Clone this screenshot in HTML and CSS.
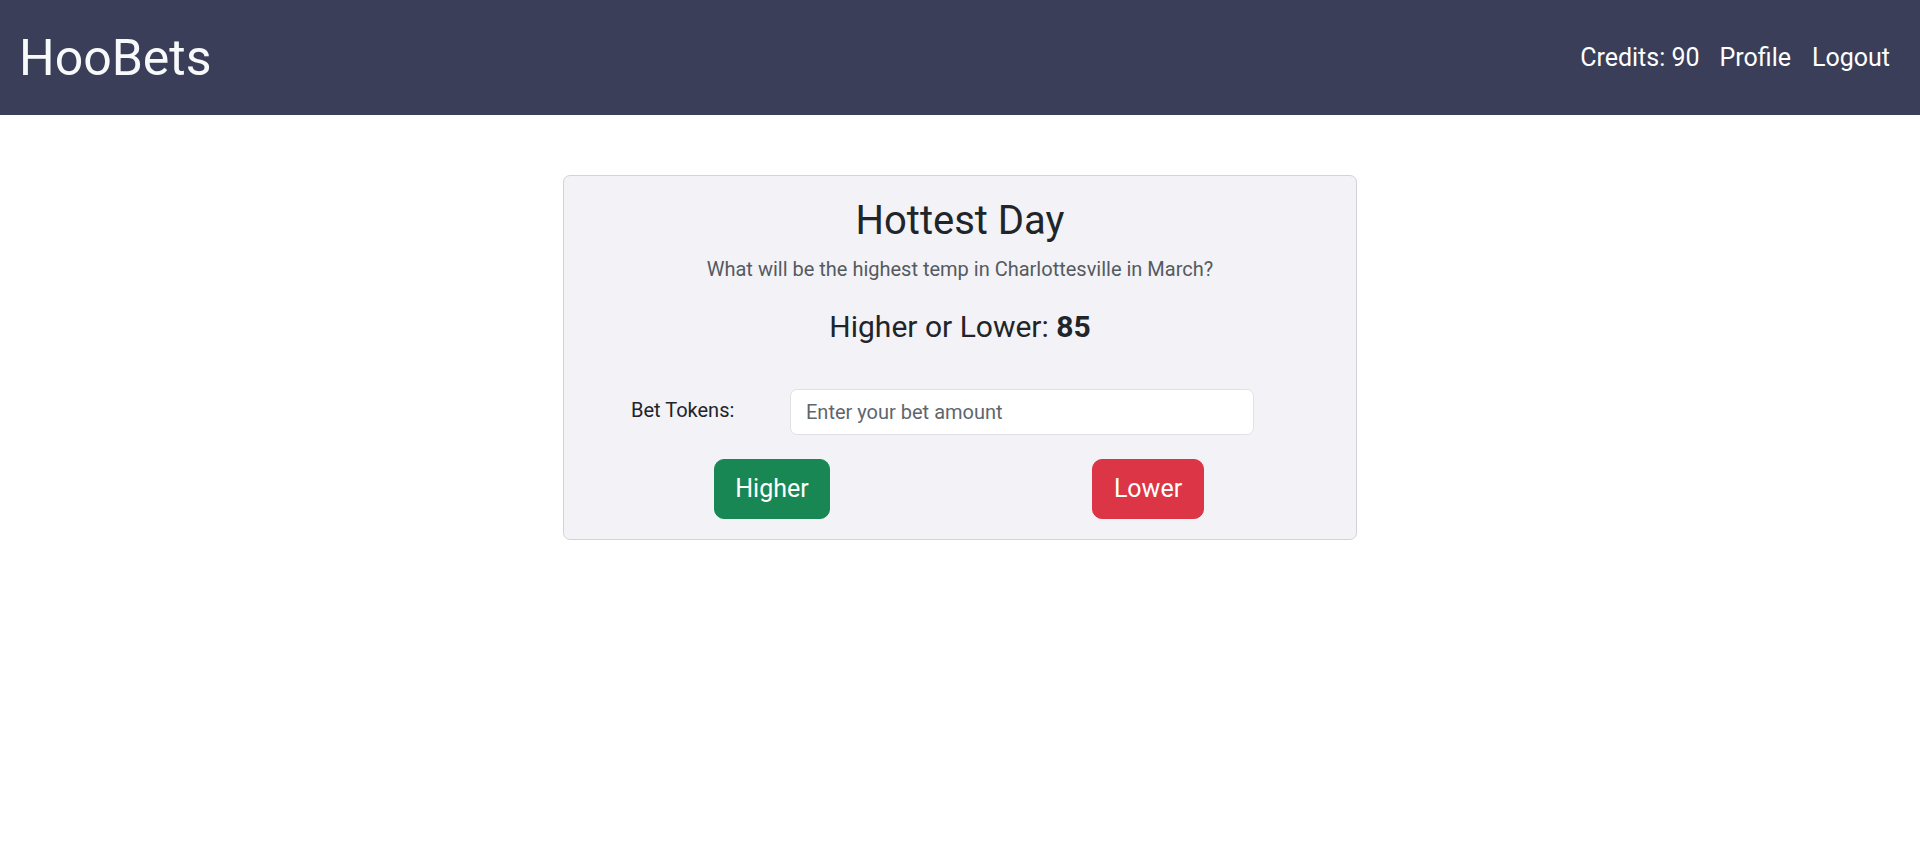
FILE: index.html
```html
<!DOCTYPE html>
<html lang="en">
<head>
<meta charset="utf-8">
<title>HooBets</title>
<link rel="stylesheet" href="styles.css">
</head>
<body>
<header class="topbar">
  <a class="brand" href="#">HooBets</a>
  <nav class="nav">
    <span class="nav-item">Credits: 90</span>
    <a class="nav-item" href="#">Profile</a>
    <a class="nav-item" href="#">Logout</a>
  </nav>
</header>
<main class="main">
  <section class="card">
    <h2 class="card-title">Hottest Day</h2>
    <p class="card-subtitle">What will be the highest temp in Charlottesville in March?</p>
    <h4 class="line">Higher or Lower: <strong>85</strong></h4>
    <form class="bet-form">
      <div class="bet-row">
        <label class="bet-label" for="bet">Bet Tokens:</label>
        <input class="bet-input" id="bet" type="number" placeholder="Enter your bet amount">
      </div>
      <div class="btn-row">
        <div class="btn-col"><button type="button" class="btn btn-higher">Higher</button></div>
        <div class="btn-col"><button type="button" class="btn btn-lower">Lower</button></div>
      </div>
    </form>
  </section>
</main>
</body>
</html>
```
FILE: styles.css
```css
* { box-sizing: border-box; }
html, body { margin: 0; padding: 0; }
body {
  font-family: Roboto, "Noto Sans", "Liberation Sans", sans-serif;
  color: #212529;
  background: #ffffff;
  font-size: 20px;
  line-height: 1.5;
}
.topbar {
  height: 115px;
  background: #3a3e59;
  display: flex;
  align-items: center;
  justify-content: space-between;
  padding: 0 30px 0 19px;
}
.brand {
  color: #f8f9fa;
  text-decoration: none;
  font-size: 50px;
  line-height: 1.2;
}
.nav {
  display: flex;
  gap: 21px;
  align-items: center;
}
.nav-item {
  color: #ffffff;
  text-decoration: none;
  font-size: 25px;
  line-height: 1.5;
}
.nav-item:first-child { margin-right: -1px; }
.main {
  padding-top: 60px;
}
.card {
  width: 794px;
  margin: 0 auto;
  background: #f2f2f7;
  border: 1px solid #d2d2d8;
  border-radius: 7px;
  padding: 21px 20px 20px;
  text-align: center;
}
.card-title {
  margin: 0 0 9px;
  font-size: 40px;
  font-weight: 400;
  line-height: 1.2;
}
.card-subtitle {
  margin: 0 0 25px;
  font-size: 20px;
  line-height: 1.5;
  color: #555a60;
}
.line {
  margin: 0;
  font-size: 30px;
  font-weight: 400;
  line-height: 1.2;
}
.line strong { font-weight: 700; }
.bet-form {
  margin: 44px 0 0;
}
.bet-row {
  display: flex;
  align-items: flex-start;
  padding-left: 47px;
}
.bet-label {
  width: 159px;
  flex-shrink: 0;
  text-align: left;
  font-size: 20px;
  line-height: 1.5;
  padding-top: 6px;
}
.bet-input {
  width: 464px;
  height: 46px;
  border: 1px solid #dee2e6;
  border-radius: 7px;
  background: #ffffff;
  padding: 0 15px;
  font-family: inherit;
  font-size: 20px;
  color: #212529;
  outline: none;
  -moz-appearance: textfield;
}
.bet-input::placeholder { color: #5f666d; opacity: 1; }
.bet-input::-webkit-outer-spin-button,
.bet-input::-webkit-inner-spin-button { -webkit-appearance: none; margin: 0; }
.btn-row {
  display: flex;
  margin-top: 24px;
}
.btn-col {
  flex: 1;
  display: flex;
  justify-content: center;
}
.btn {
  font-family: inherit;
  font-size: 25px;
  line-height: 1.5;
  padding: 10px 20px;
  border-radius: 10px;
  border: 1px solid transparent;
  color: #ffffff;
  cursor: pointer;
}
.btn-higher { background: #198754; border-color: #198754; }
.btn-lower { background: #dc3545; border-color: #dc3545; padding: 10px 21px; }
```
